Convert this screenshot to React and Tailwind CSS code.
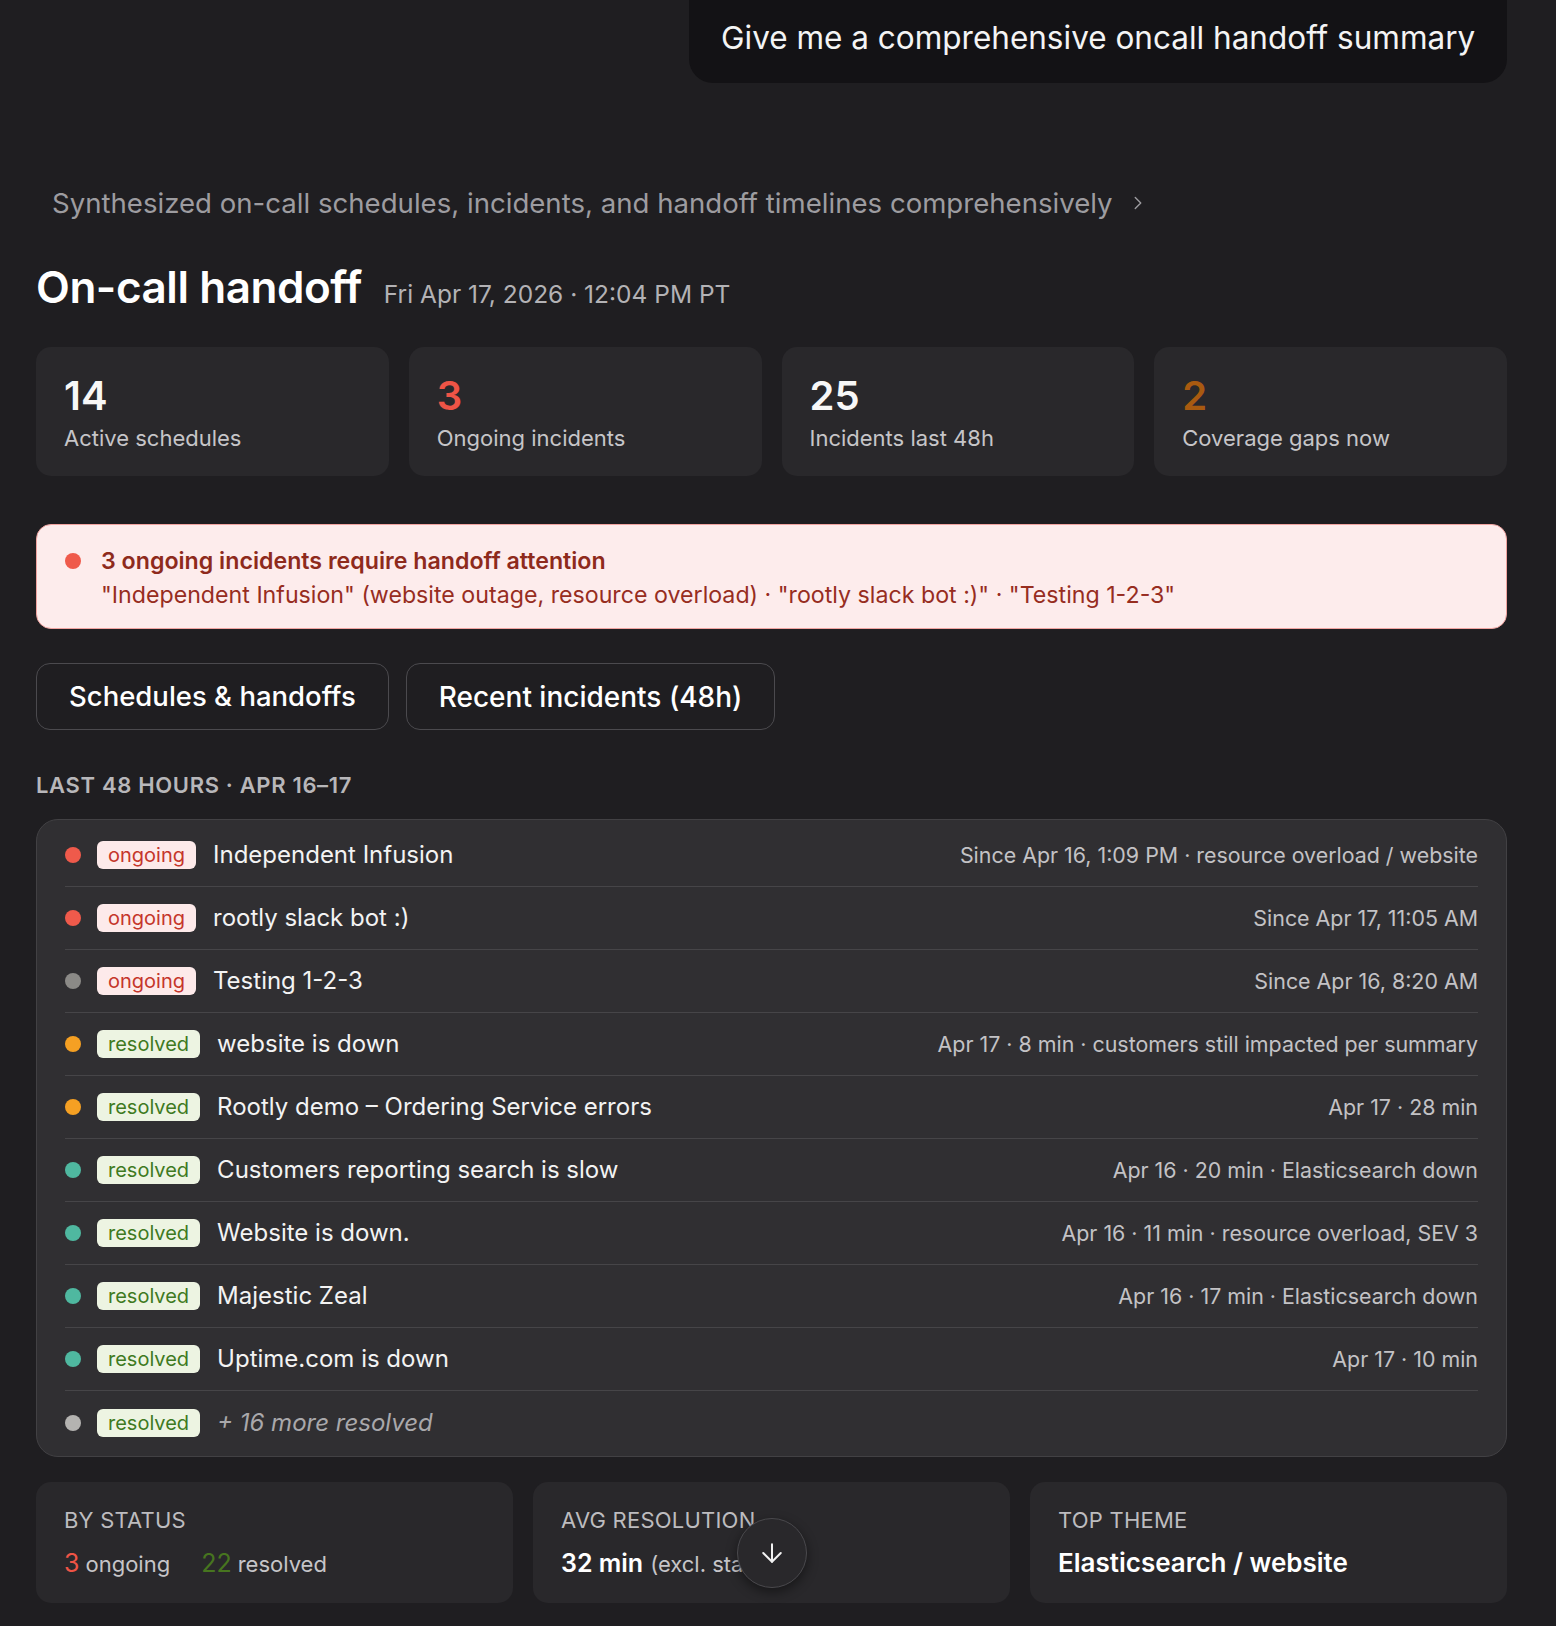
import React from "react";
import { ChevronRight, ArrowDown } from "lucide-react";

const stats = [
  { n: "14", label: "Active schedules", color: "text-[#f7f7f7]" },
  { n: "3", label: "Ongoing incidents", color: "text-[#ef5446]" },
  { n: "25", label: "Incidents last 48h", color: "text-[#f7f7f7]" },
  { n: "2", label: "Coverage gaps now", color: "text-[#a85a10]" },
];

const rows = [
  { dot: "bg-[#ef5a4b]", status: "ongoing", title: "Independent Infusion", meta: "Since Apr 16, 1:09 PM · resource overload / website" },
  { dot: "bg-[#ef5a4b]", status: "ongoing", title: "rootly slack bot :)", meta: "Since Apr 17, 11:05 AM" },
  { dot: "bg-[#8b8a87]", status: "ongoing", title: "Testing 1-2-3", meta: "Since Apr 16, 8:20 AM" },
  { dot: "bg-[#f5a023]", status: "resolved", title: "website is down", meta: "Apr 17 · 8 min · customers still impacted per summary" },
  { dot: "bg-[#f5a023]", status: "resolved", title: "Rootly demo – Ordering Service errors", meta: "Apr 17 · 28 min" },
  { dot: "bg-[#4fb8a0]", status: "resolved", title: "Customers reporting search is slow", meta: "Apr 16 · 20 min · Elasticsearch down" },
  { dot: "bg-[#4fb8a0]", status: "resolved", title: "Website is down.", meta: "Apr 16 · 11 min · resource overload, SEV 3" },
  { dot: "bg-[#4fb8a0]", status: "resolved", title: "Majestic Zeal", meta: "Apr 16 · 17 min · Elasticsearch down" },
  { dot: "bg-[#4fb8a0]", status: "resolved", title: "Uptime.com is down", meta: "Apr 17 · 10 min" },
  { dot: "bg-[#b4b3b1]", status: "resolved", title: "+ 16 more resolved", meta: "", more: true },
];

function Badge({ status }) {
  if (status === "ongoing") {
    return (
      <span className="shrink-0 rounded-[6px] bg-[#fdeaea] px-[11px] text-[20px] leading-[28px] text-[#c5362b]">
        ongoing
      </span>
    );
  }
  return (
    <span className="shrink-0 rounded-[6px] bg-[#edf4e2] px-[11px] text-[20px] leading-[28px] text-[#3f7a1f]">
      resolved
    </span>
  );
}

export default function App() {
  return (
    <div className="relative min-h-[1626px] bg-[#1f1e21] pl-[36px] pr-[49px] font-['Inter','Noto_Sans',sans-serif] text-white antialiased">
      {/* user bubble */}
      <div className="flex justify-end">
        <div className="h-[83px] w-[818px] rounded-b-[24px] bg-[#131215] pl-[32px] pt-[17px] text-[31.5px] leading-[42px] text-[#f4f4f4]">
          Give me a comprehensive oncall handoff summary
        </div>
      </div>

      {/* synthesized */}
      <div className="mt-[102px] flex items-center gap-[14px] pl-[16px] text-[27.6px] leading-[36px] text-[#9d9ca0]">
        <span>Synthesized on-call schedules, incidents, and handoff timelines comprehensively</span>
        <ChevronRight size={22} strokeWidth={1.5} className="text-[#9d9ca0]" />
      </div>

      {/* title */}
      <div className="mt-[40px] flex items-baseline gap-[22px]">
        <h1 className="text-[44px] font-semibold leading-[52px] tracking-[-0.01em] text-white">On-call handoff</h1>
        <span className="text-[24.5px] leading-[36px] text-[#b3b2b5]">Fri Apr 17, 2026 · 12:04 PM PT</span>
      </div>

      {/* stats */}
      <div className="mt-[34px] grid grid-cols-4 gap-[20px]">
        {stats.map((s) => (
          <div key={s.label} className="h-[129px] rounded-[15px] bg-[#29282b] pl-[28px] pt-[25px]">
            <div className={`text-[40px] font-semibold leading-[48px] ${s.color}`}>{s.n}</div>
            <div className="mt-[4px] text-[22px] leading-[28px] text-[#c6c5c8]">{s.label}</div>
          </div>
        ))}
      </div>

      {/* alert */}
      <div className="mt-[48px] flex items-start gap-[20px] rounded-[15px] border border-[#f0a3a0] bg-[#fdecec] pb-[16px] pl-[28px] pt-[19px]">
        <span className="mt-[9px] h-[16px] w-[16px] shrink-0 rounded-full bg-[#ef5a4b]" />
        <div className="text-[23.2px] leading-[34px]">
          <div className="font-semibold text-[#8e2a1c]">3 ongoing incidents require handoff attention</div>
          <div className="text-[#972d1f]">
            "Independent Infusion" (website outage, resource overload) · "rootly slack bot :)" · "Testing 1-2-3"
          </div>
        </div>
      </div>

      {/* tabs */}
      <div className="mt-[34px] flex gap-[17px]">
        <button className="h-[67px] rounded-[14px] border border-[#4b4a4e] px-[32px] text-[27.5px] font-medium text-white">
          Schedules &amp; handoffs
        </button>
        <button className="h-[67px] rounded-[14px] border border-[#4b4a4e] px-[32px] text-[28px] font-medium text-white">
          Recent incidents (48h)
        </button>
      </div>

      {/* section label */}
      <div className="mt-[40px] text-[22px] font-semibold uppercase leading-[30px] tracking-[0.03em] text-[#b8b7ba]">
        Last 48 hours · Apr 16–17
      </div>

      {/* incidents list */}
      <div className="mt-[19px] rounded-[22px] border border-[#424144] bg-[#302f32] px-[28px] pb-[2px] pt-[4px]">
        {rows.map((r, i) => (
          <div
            key={i}
            className={`flex h-[63px] items-center ${i < rows.length - 1 ? "border-b border-[#464548]" : ""}`}
          >
            <span className={`h-[16px] w-[16px] shrink-0 rounded-full ${r.dot}`} />
            <span className="ml-[16px] flex">
              <Badge status={r.status} />
            </span>
            <span
              className={`ml-[17px] text-[24px] leading-[32px] ${r.more ? "italic text-[#a9a8ab]" : "text-[#f3f3f3]"}`}
            >
              {r.title}
            </span>
            {r.meta && (
              <span className="ml-auto text-[21.4px] leading-[30px] text-[#c3c2c5]">{r.meta}</span>
            )}
          </div>
        ))}
      </div>

      {/* bottom cards */}
      <div className="mt-[25px] grid grid-cols-3 gap-[20px]">
        <div className="h-[121px] rounded-[15px] bg-[#29282b] pl-[28px] pt-[23px]">
          <div className="text-[22px] uppercase leading-[30px] tracking-[0.01em] text-[#bdbcbf]">By status</div>
          <div className="mt-[10px] flex items-baseline text-[22px] leading-[36px] text-[#c6c5c8]">
            <span className="text-[25px] text-[#ef5446]">3</span>
            <span className="ml-[6px]">ongoing</span>
            <span className="ml-[31px] text-[25px] text-[#47751f]">22</span>
            <span className="ml-[6px]">resolved</span>
          </div>
        </div>
        <div className="h-[121px] overflow-hidden rounded-[15px] bg-[#29282b] pl-[28px] pt-[23px]">
          <div className="text-[22px] uppercase leading-[30px] tracking-[0.01em] text-[#bdbcbf]">Avg resolution</div>
          <div className="mt-[10px] flex items-baseline whitespace-nowrap text-[22px] leading-[36px] text-[#c6c5c8]">
            <span className="text-[25px] font-semibold text-white">32 min</span>
            <span className="ml-[7px]">(excl. stale)</span>
          </div>
        </div>
        <div className="h-[121px] rounded-[15px] bg-[#29282b] pl-[28px] pt-[23px]">
          <div className="text-[22px] uppercase leading-[30px] tracking-[0.01em] text-[#bdbcbf]">Top theme</div>
          <div className="mt-[10px] text-[26px] font-semibold leading-[36px] text-white">Elasticsearch / website</div>
        </div>
      </div>

      {/* scroll-to-bottom floating button */}
      <button className="absolute left-[737px] top-[1518px] flex h-[70px] w-[70px] items-center justify-center rounded-full border border-[#4a494d] bg-[#29282b] shadow-[0_4px_12px_rgba(0,0,0,0.45)]">
        <ArrowDown size={30} strokeWidth={1.6} className="text-[#f2f2f2]" />
      </button>
    </div>
  );
}
